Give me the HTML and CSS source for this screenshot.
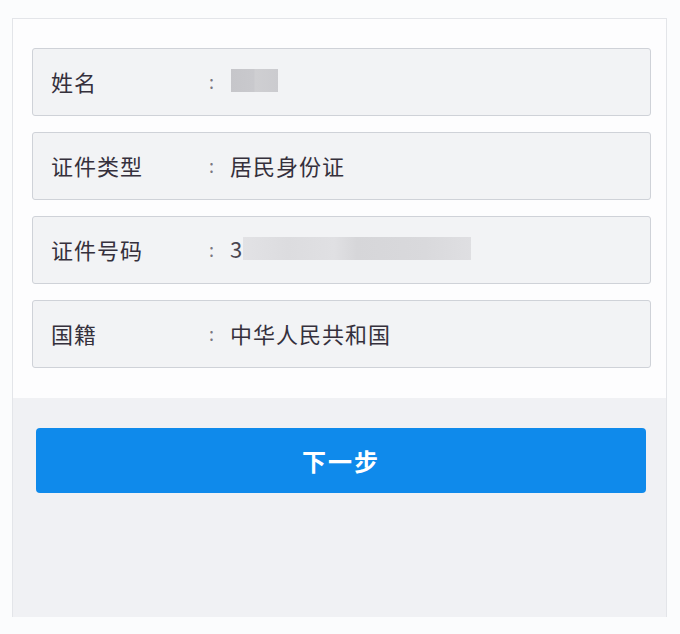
FILE: index.html
```html
<!DOCTYPE html>
<html lang="zh-CN">
<head>
<meta charset="utf-8">
<title>实名信息</title>
<link rel="stylesheet" href="styles.css">
</head>
<body>
<div class="frame">
  <div class="panel">
    <div class="info">
      <div class="row">
        <span class="label">姓名</span>
        <span class="colon">:</span>
        <span class="value"><span class="mask mask-name"></span></span>
      </div>
      <div class="row">
        <span class="label">证件类型</span>
        <span class="colon">:</span>
        <span class="value">居民身份证</span>
      </div>
      <div class="row">
        <span class="label">证件号码</span>
        <span class="colon">:</span>
        <span class="value"><span class="lead">3</span><span class="mask mask-id"></span></span>
      </div>
      <div class="row">
        <span class="label">国籍</span>
        <span class="colon">:</span>
        <span class="value">中华人民共和国</span>
      </div>
    </div>
    <div class="actions">
      <button class="next" type="button">下一步</button>
    </div>
  </div>
</div>
</body>
</html>
```
FILE: styles.css
```css
html, body {
  margin: 0;
  padding: 0;
}
body {
  background: #fbfcfd;
  font-family: "Noto Sans CJK SC", "Noto Sans", sans-serif;
  color: #35303c;
  width: 680px;
  height: 634px;
  overflow: hidden;
}
.frame {
  padding: 18px 13px 0 12px;
}
.panel {
  border: 1px solid #e3e5e9;
  border-bottom: none;
  height: 599px;
  display: flex;
  flex-direction: column;
  box-sizing: border-box;
}
.info {
  background: #fdfdfe;
  padding: 29px 15px 30px 19px;
  display: flex;
  flex-direction: column;
  gap: 16px;
}
.row {
  height: 68px;
  box-sizing: border-box;
  border: 1px solid #cfd2d8;
  border-radius: 3px;
  background: #f2f3f5;
  display: flex;
  align-items: center;
  padding-left: 18px;
  padding-bottom: 3px;
  font-size: 22px;
  letter-spacing: 1px;
}
.label {
  width: 158px;
  flex: none;
}
.colon {
  width: 21px;
  flex: none;
  color: #7a7680;
  font-size: 18px;
}
.value {
  display: flex;
  align-items: center;
}
.mask {
  display: block;
  height: 23px;
}
.mask-name {
  width: 47px;
  margin-left: 1px;
  background: linear-gradient(90deg, #c6c6ca 0%, #c9c9cd 48%, #cfcfd2 52%, #cbcbcf 100%);
}
.lead {
  display: block;
  line-height: 23px;
  color: #4a4650;
  letter-spacing: 0;
  margin-right: 1px;
}
.mask-id {
  width: 228px;
  background: linear-gradient(90deg, #e2e2e5 0%, #dcdcdf 20%, #e0e0e3 40%, #d6d6d9 50%, #d9d9dc 80%, #dfdfe2 100%);
}
.actions {
  flex: 1;
  background: #f0f1f4;
  padding: 30px 20px 0 23px;
}
.next {
  display: block;
  width: 100%;
  height: 65px;
  border: none;
  border-radius: 4px;
  background: #0f8aeb;
  color: #ffffff;
  font-family: "Noto Sans CJK SC", sans-serif;
  font-size: 24px;
  font-weight: 700;
  letter-spacing: 2px;
  padding: 0;
}
```
